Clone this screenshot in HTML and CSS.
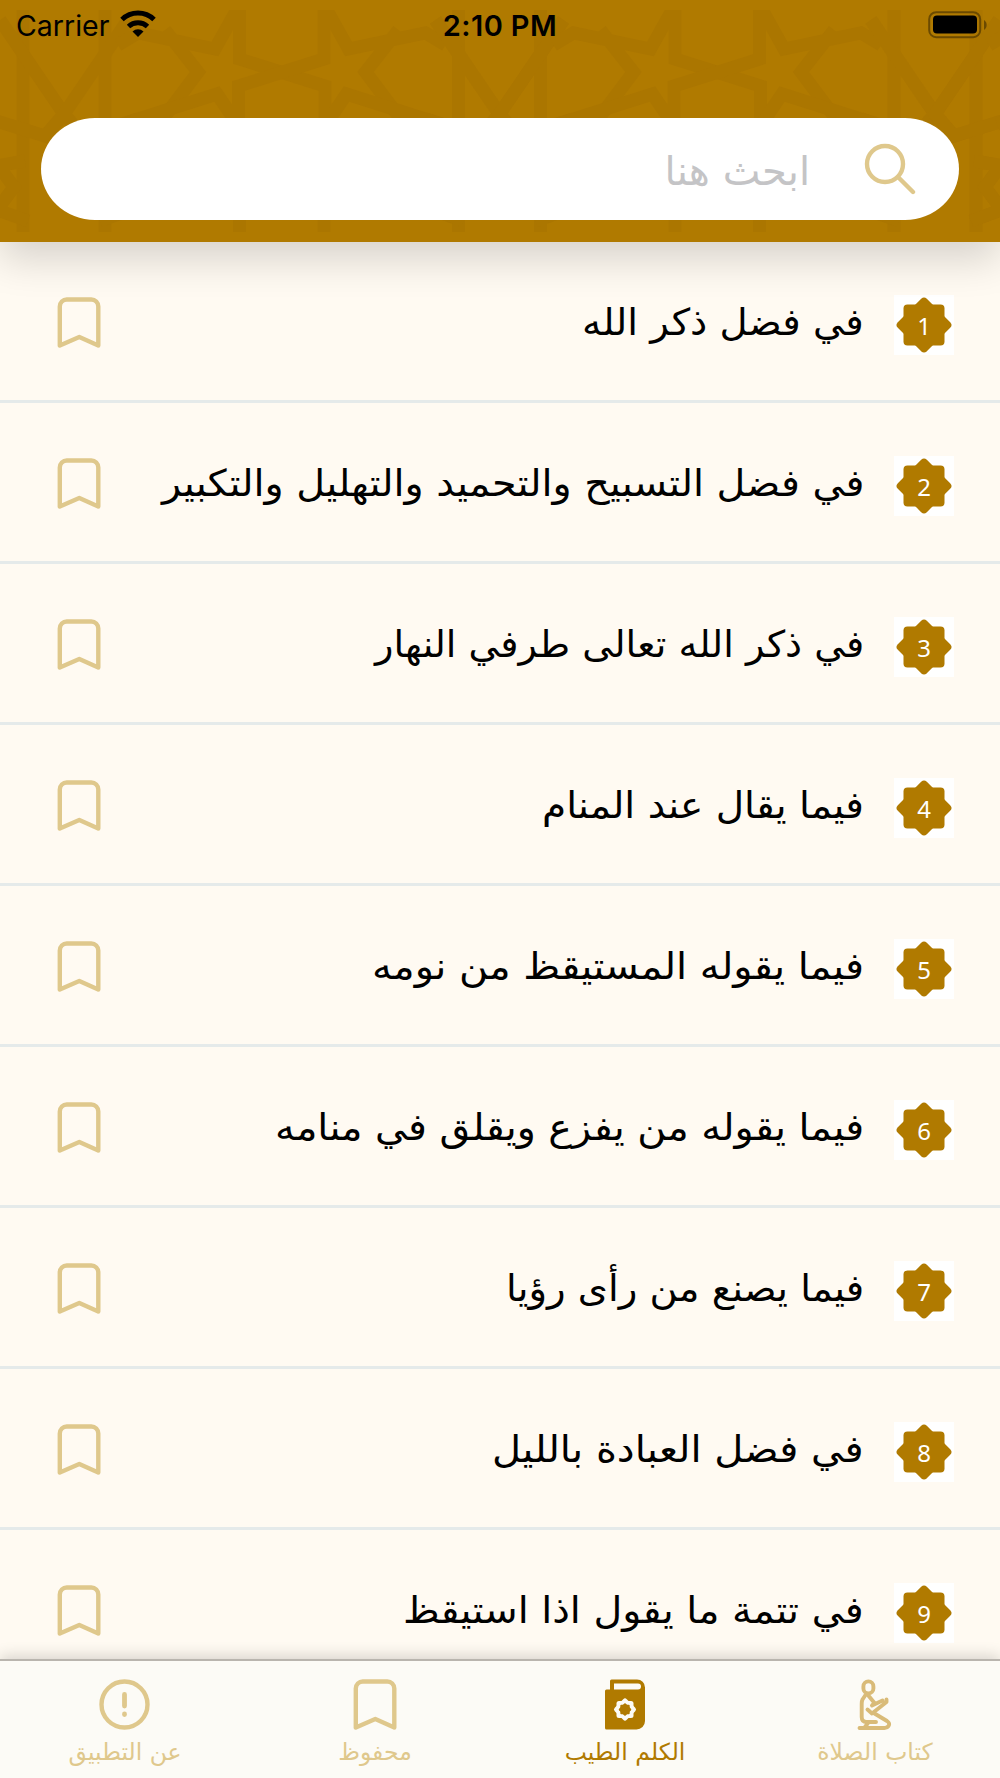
FILE: index.html
```
<!DOCTYPE html>
<html lang="ar" dir="rtl">
<head>
  <meta charset="UTF-8" />
  <meta name="viewport" content="width=device-width, initial-scale=1.0" />
  <title>الكلم الطيب</title>
  <link rel="stylesheet" href="styles.css">
</head>
<body>
  <svg class="symbols" width="0" height="0">
    <symbol id="bookmark" viewBox="0 0 44 52">
      <path d="M2.8 48.500V9.500a7 7 0 0 1 7-7h24.500a7 7 0 0 1 7 7V48.500L22.300 40z" fill="none" stroke="currentColor" stroke-width="4.400" stroke-linejoin="round" />
    </symbol>
    <symbol id="star" viewBox="0 0 60 60">
      <g fill="#b07a00">
        <rect x="9.500" y="9.500" width="41" height="41" rx="4" />
        <rect x="9.500" y="9.500" width="41" height="41" rx="4" transform="rotate(45 30 30)" />
      </g>
    </symbol>
  </svg>

  <header class="header">
    <svg class="pattern" width="1000" height="222" viewBox="0 10 1000 222">
      <defs>
        <g id="corner">
          <path d="M23 0V240" />
          <path d="M0 20L64 114L45 136L-10 119" />
          <path d="M-10 167L25 161M0 168L14 187L0 206M-5 209L28 221" />
        </g>
        <g id="half" fill="none" stroke="#ab7600" stroke-width="13">
          <use href="#corner" />
          <use href="#corner" transform="translate(128 0) scale(-1 1)" />
          <path d="M118 45L138 33L215 49L240 4M165 30L198 72L168 112L126 124" />
          <path d="M132 121L217 94L236 122" />
          <path d="M239.500 0V59L325 86V125M239.500 210V240" />
        </g>
        <g id="tile">
          <use href="#half" />
          <use href="#half" transform="translate(563.500 0) scale(-1 1)" />
        </g>
      </defs>
      <use href="#tile" />
      <use href="#tile" x="435.500" />
      <use href="#half" x="871" />
    </svg>

    <div class="status-bar" dir="ltr">
      <div class="carrier">
        <span>Carrier</span>
        <svg width="36" height="27" viewBox="0 0 36 27">
          <path d="M2 9.500a23 23 0 0 1 32 0M8.500 16.500a14 14 0 0 1 19 0" fill="none" stroke="#000" stroke-width="5" />
          <path d="M18 27l-5.500-5.500a8 8 0 0 1 11 0z" />
        </svg>
      </div>
      <div class="time">2:10 PM</div>
      <svg class="battery" width="60" height="28" viewBox="0 0 60 28">
        <rect x="1.200" y="1.200" width="51" height="25" rx="7" fill="none" stroke="#6b4a00" stroke-width="2" />
        <rect x="5" y="4.500" width="44" height="18" rx="4" />
        <path d="M56 9a6 6 0 0 1 0 10z" fill="#6b4a00" />
      </svg>
    </div>

    <div class="search">
      <svg width="52" height="52" viewBox="0 0 52 52" fill="none" stroke="#dfc88c" stroke-width="4.400" stroke-linecap="round">
        <circle cx="21" cy="21" r="18" />
        <path d="M34 34l15 15" />
      </svg>
      <span class="placeholder">ابحث هنا</span>
    </div>
  </header>

  <main class="list" id="list"></main>

  <nav class="tabs">
    <div class="tab">
      <svg width="36" height="52" viewBox="0 0 36 52" fill="none" stroke="#d9bb78" stroke-width="3.900" stroke-linecap="round" stroke-linejoin="round">
        <rect x="6.400" y="2.400" width="10" height="12" rx="5" />
        <path d="M8.500 16L5.500 20.500Q4.700 22 4.700 25V38Q4.700 43 9.500 43H19M11 44L8 48" />
        <path d="M10.500 15.500L17.500 24L15 26.500L25.500 21.500M29.500 20.500V23L15 34.500L10.500 30.500" />
        <path d="M17.500 34.500L30 42Q33.500 44.500 31.500 47Q30 49 27.500 49H2.500" />
      </svg>
      <span class="tab-label">كتاب الصلاة</span>
    </div>
    <div class="tab active">
      <svg width="40" height="52" viewBox="0 0 40 52">
        <path d="M5 10.500V2Q5 .5 6.500 .5H32a8 8 0 0 1 8 8V42a8.500 8.500 0 0 1-8.500 8.500H1.500Q0 50.500 0 49V12Q0 10.500 1.500 10.500z" fill="#b07a00" />
        <path d="M9 4.500H33a3 3 0 0 1 3 3a3 3 0 0 1-3 3H9z" fill="#fcfbf6" />
        <g fill="#fcfbf6">
          <rect x="11.500" y="22" width="17" height="17" rx="2.500" />
          <rect x="11.500" y="22" width="17" height="17" rx="2.500" transform="rotate(45 20 30.500)" />
        </g>
        <g fill="#b07a00">
          <rect x="15.300" y="25.800" width="9.400" height="9.400" rx="1" />
          <rect x="15.300" y="25.800" width="9.400" height="9.400" rx="1" transform="rotate(45 20 30.500)" />
        </g>
      </svg>
      <span class="tab-label">الكلم الطيب</span>
    </div>
    <div class="tab">
      <svg width="44" height="52"><use href="#bookmark" /></svg>
      <span class="tab-label">محفوظ</span>
    </div>
    <div class="tab">
      <svg width="52" height="52" viewBox="0 0 52 52" fill="none" stroke="currentColor" stroke-width="4.400" stroke-linecap="round">
        <circle cx="25.500" cy="25.500" r="23" />
        <path d="M25.500 15.500V27M25.500 35V35.500" stroke-width="4.800" />
      </svg>
      <span class="tab-label">عن التطبيق</span>
    </div>
  </nav>

  <script src="script.js"></script>
</body>
</html>
```
FILE: styles.css
```
body {
  margin: 0;
  width: 1000px;
  height: 1778px;
  overflow: hidden;
  display: flex;
  flex-direction: column;
  background-color: #fffaf2;
  font-family: 'DejaVu Sans', sans-serif;
  color: #000;
}

svg {
  display: block;
  flex: none;
}

.symbols {
  position: absolute;
}

.header {
  position: relative;
  z-index: 1;
  height: 241.5px;
  flex: none;
  background-color: #b07a00;
  box-shadow: 0 17px 38px rgba(0, 0, 0, 0.16);
}

.pattern {
  position: absolute;
  top: 10px;
  left: 0;
}

.status-bar {
  position: relative;
  height: 50px;
  padding: 0 12px 0 16px;
  display: grid;
  grid-template-columns: 1fr auto 1fr;
  align-items: center;
  font-family: Inter, sans-serif;
  font-size: 28.5px;
}

.carrier {
  display: flex;
  align-items: center;
  gap: 11px;
}

.carrier svg {
  margin-top: -3px;
}

.time {
  margin-right: 4px;
  font-size: 29px;
  font-weight: 600;
  letter-spacing: 0.4px;
}

.battery {
  justify-self: end;
}

.search {
  position: relative;
  height: 102px;
  margin: 68px 41px 0;
  padding-right: 43px;
  display: flex;
  align-items: center;
  gap: 54px;
  background-color: #fff;
  border-radius: 54px / 51px;
}

.placeholder {
  padding-top: 4px;
  font-size: 40px;
  color: #c4c4c6;
}

.list {
  flex: 1;
  min-height: 0;
  overflow: hidden;
}

.row {
  height: 161px;
  box-sizing: border-box;
  padding: 7px 46px 0 57px;
  display: flex;
  align-items: center;
  border-bottom: 3px solid #e5eaea;
}

.badge {
  width: 60px;
  height: 60px;
  margin: 2px 0 0 30px;
  display: grid;
  place-items: center;
  background-color: #fff;
}

.badge svg,
.badge span {
  grid-area: 1 / 1;
}

.badge span {
  font-family: 'Noto Sans', sans-serif;
  font-size: 24px;
  color: #fff;
}

.title {
  margin-top: -4px;
  font-size: 37px;
  white-space: nowrap;
  transform-origin: right center;
}

.row .bookmark {
  margin: -2px auto 0 0;
}

.bookmark,
.tab {
  color: #dfc88c;
}

.tabs {
  position: relative;
  z-index: 1;
  height: 119px;
  flex: none;
  box-sizing: border-box;
  padding-top: 18px;
  display: grid;
  grid-template-columns: repeat(4, 1fr);
  background-color: #fcfbf6;
  border-top: 2px solid #b9b5ae;
  box-shadow: 0 -3px 14px rgba(0, 0, 0, 0.16);
}

.tab {
  display: flex;
  flex-direction: column;
  align-items: center;
  gap: 7px;
}

.tab.active {
  color: #b07a00;
}

.tab-label {
  font-size: 23.5px;
  white-space: nowrap;
}
```
FILE: script.js
```
// title and its drawn width
const chapters = [
  ["في فضل ذكر الله", 282],
  ["في فضل التسبيح والتحميد والتهليل والتكبير", 702],
  ["في ذكر الله تعالى طرفي النهار", 489],
  ["فيما يقال عند المنام", 322],
  ["فيما يقوله المستيقظ من نومه", 492],
  ["فيما يقوله من يفزع ويقلق في منامه", 589],
  ["فيما يصنع من رأى رؤيا", 358],
  ["في فضل العبادة بالليل", 372],
  ["في تتمة ما يقول اذا استيقظ", 461]
];

const list = document.getElementById("list");

chapters.forEach(([title, width], i) => {
  const row = document.createElement("div");
  row.className = "row";
  row.innerHTML = `
    <div class="badge">
      <svg width="60" height="60"><use href="#star" /></svg>
      <span>${i + 1}</span>
    </div>
    <div class="title">${title}</div>
    <svg class="bookmark" width="44" height="52"><use href="#bookmark" /></svg>`;
  list.appendChild(row);

  const label = row.querySelector(".title");
  label.style.transform = `scaleX(${width / label.offsetWidth})`;
});
```
